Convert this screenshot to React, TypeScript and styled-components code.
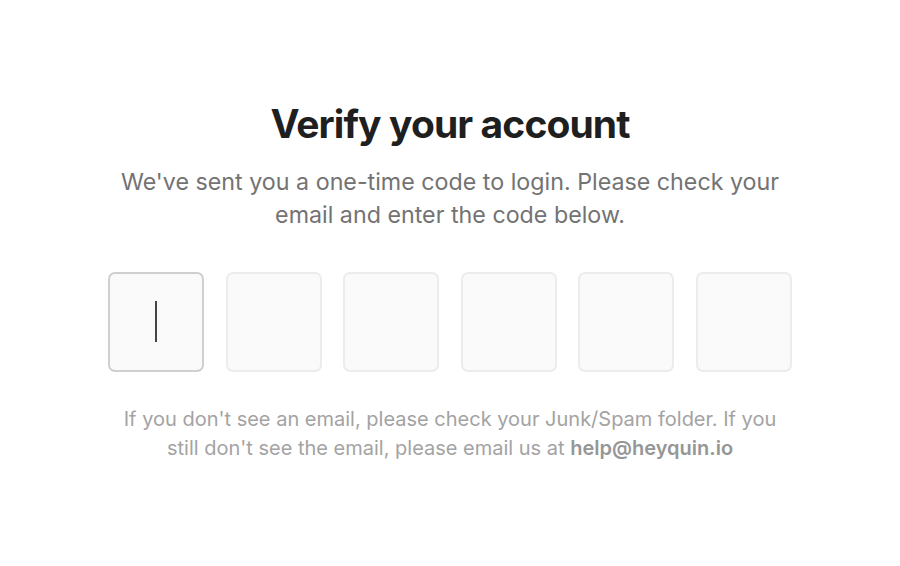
import React from "react";
import styled, { createGlobalStyle } from "styled-components";

const Global = createGlobalStyle`
  html, body { margin: 0; padding: 0; background: #ffffff; }
  body { font-family: Inter, "Noto Sans", sans-serif; }
  #root { min-height: 100vh; }
`;

const Page = styled.main`
  box-sizing: border-box;
  min-height: 566px;
  padding-bottom: 4px;
  display: flex;
  align-items: center;
  justify-content: center;
`;

const Content = styled.section`
  display: flex;
  flex-direction: column;
  align-items: center;
  width: 684px;
`;

const Title = styled.h1`
  margin: 0;
  font-family: Inter, sans-serif;
  font-size: 39px;
  font-weight: 650;
  letter-spacing: -0.9px;
  line-height: 48px;
  color: #1f1f1f;
  text-align: center;
`;

const Subtitle = styled.p`
  margin: 17px 0 0;
  width: 676px;
  font-size: 23.25px;
  line-height: 33px;
  color: #737373;
  text-align: center;
`;

const CodeRow = styled.div`
  display: grid;
  grid-template-columns: repeat(6, 96px);
  column-gap: 21.6px;
  margin-top: 41px;
`;

const CodeBox = styled.div<{ $active?: boolean }>`
  box-sizing: border-box;
  height: 100px;
  border-radius: 7px;
  background: #fafafa;
  border: 2px solid ${(p) => (p.$active ? "#cfcfcf" : "#ececec")};
  display: flex;
  align-items: center;
  justify-content: center;
`;

const Caret = styled.span`
  display: block;
  width: 2px;
  height: 41px;
  background: #444444;
`;

const Note = styled.p`
  margin: 33px 0 0;
  width: 672px;
  font-size: 20px;
  line-height: 29px;
  color: #a3a3a3;
  text-align: center;
`;

const Email = styled.span`
  font-weight: 600;
  color: #969696;
`;

export default function App() {
  return (
    <>
      <Global />
      <Page>
        <Content>
          <Title>Verify your account</Title>
          <Subtitle>
            We've sent you a one-time code to login. Please check your email and enter the code below.
          </Subtitle>
          <CodeRow>
            {[0, 1, 2, 3, 4, 5].map((i) => (
              <CodeBox key={i} $active={i === 0}>
                {i === 0 && <Caret />}
              </CodeBox>
            ))}
          </CodeRow>
          <Note>
            If you don't see an email, please check your Junk/Spam folder. If you still don't see the
            email, please email us at <Email>help@heyquin.io</Email>
          </Note>
        </Content>
      </Page>
    </>
  );
}
